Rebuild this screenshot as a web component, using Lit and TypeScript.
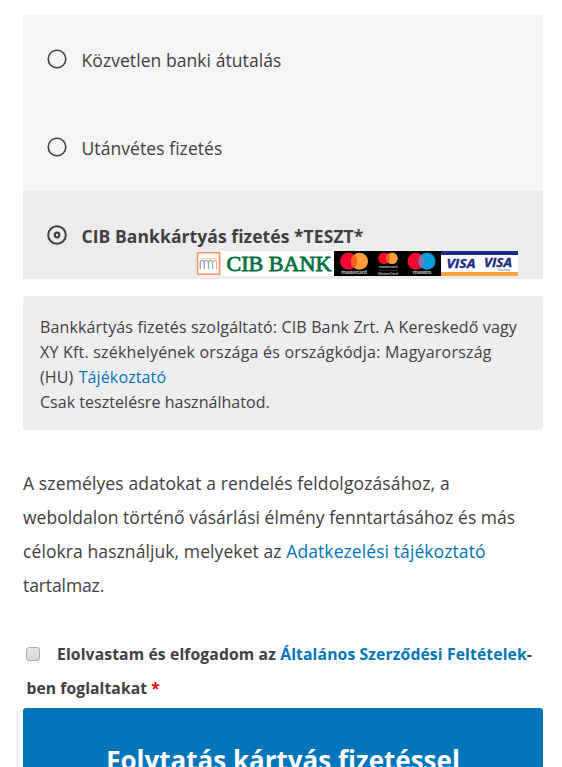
import { LitElement, html, css, svg } from "lit";
import { customElement, property } from "lit/decorators.js";

@customElement("card-logos")
class CardLogos extends LitElement {
  static styles = css`
    :host { display: block; width: 322px; height: 25px; }
    svg { display: block; }
    .bank { font: 400 22px "Liberation Serif", serif; fill: #00703c; stroke: #00703c; stroke-width: 0.8px; }
    .brand { font: 700 5.5px "Open Sans", sans-serif; fill: #aaa; }
    .tiny { font-size: 4px; fill: #999; }
    .visa { font: italic 700 13px "Open Sans", sans-serif; fill: #1b2a80; stroke: #1b2a80; stroke-width: 0.3px; }
    .electron { font: italic 400 3.5px "Open Sans", sans-serif; fill: #555b9a; }
  `;

  private pair(x: number, y: number, r: number, gap: number, left: string, mid: string, right: string) {
    return svg`
      <circle cx=${x} cy=${y} r=${r} fill=${left} />
      <circle cx=${x + gap} cy=${y} r=${r} fill=${right} />
      <ellipse cx=${x + gap / 2} cy=${y} rx=${r - gap / 2} ry=${r * 0.72} fill=${mid} />`;
  }

  render() {
    return html`<svg width="322" height="25" viewBox="0 0 322 25">
      <rect width="138" height="25" fill="#fff" />
      <rect x="1.5" y="1.7" width="22" height="21.6" fill="#fff" stroke="#f79a6b" stroke-width="1.8" />
      <path d="M4 7.8H21" stroke="#f6d58a" stroke-width="1.2" />
      <path d="M4.2 18V12Q4.2 9.5 6.2 9.5T8.2 12V18" fill="none" stroke="#8b83ba" stroke-width="1.1" />
      <path d="M8.2 12Q8.4 9.5 10.4 9.5T12.4 12V18" fill="none" stroke="#8aa6c4" stroke-width="1.1" />
      <path d="M12.6 18V12Q12.6 9.5 14.6 9.5T16.6 12V18" fill="none" stroke="#82b899" stroke-width="1.1" />
      <path d="M16.8 12Q17 9.5 18.8 9.5T20.6 12V18" fill="none" stroke="#ee9c85" stroke-width="1.1" />
      <text class="bank" x="30.5" y="20.2" textLength="105" lengthAdjust="spacingAndGlyphs">CIB BANK</text>
      <rect x="138" width="107" height="25" fill="#000" />
      ${this.pair(152.5, 10.3, 8.5, 11, "#f3072c", "#fa5b21", "#fc9d38")}
      ${this.pair(188, 7.3, 5.8, 8, "#f3072c", "#fa5b21", "#fc9d38")}
      ${this.pair(220, 10.3, 8.5, 11, "#f3072c", "#7673b8", "#00a0df")}
      <text class="brand" x="145" y="23" textLength="26">mastercard</text>
      <text class="brand tiny" x="182.5" y="16.8" textLength="19">mastercard</text>
      <path d="M182 19.3H202" stroke="#555" stroke-width="0.6" />
      <text class="brand tiny" x="182" y="24" textLength="20">MasterCard</text>
      <text class="brand" x="226" y="23" text-anchor="middle" textLength="19">maestro</text>
      <rect x="245" width="77" height="25" fill="#fff" />
      <rect x="245" width="77" height="4" fill="#1d2c83" />
      <rect x="245" y="21" width="77" height="4" fill="#fba13d" />
      <text class="visa" x="250.5" y="17.4" textLength="29" lengthAdjust="spacingAndGlyphs">VISA</text>
      <text class="visa" x="288" y="16.2" textLength="28" lengthAdjust="spacingAndGlyphs">VISA</text>
      <text class="electron" x="302" y="20" textLength="12">Electron</text>
    </svg>`;
  }
}

@customElement("pay-option")
class PayOption extends LitElement {
  @property({ type: Boolean }) checked = false;
  static styles = css`
    :host { display: flex; flex-direction: column; height: 88px; background: #f5f5f5; box-sizing: border-box; padding: 0 25px 0 24px; }
    :host([checked]) { background: #ececec; }
    .row { display: flex; align-items: center; height: 26px; margin-top: 32px; }
    svg { flex: none; margin: 0 14.5px 3px 0; }
    .label { white-space: nowrap; }
    .logos { align-self: flex-end; margin-top: 2px; }
  `;
  render() {
    return html`<div class="row">
        <svg width="20" height="20" viewBox="0 0 20 20">
          <circle cx="10" cy="10" r="8.8" fill="none" stroke="#404040" stroke-width=${this.checked ? 2 : 1.6} />
          ${this.checked ? svg`<circle cx="10" cy="10" r="2.3" fill="none" stroke="#404040" stroke-width="2.2" />` : ""}
        </svg>
        <span class="label"><slot></slot></span>
      </div>
      <div class="logos"><slot name="logos"></slot></div>`;
  }
}

@customElement("app-root")
class AppRoot extends LitElement {
  static styles = css`
    :host { display: block; height: 767px; overflow: hidden; box-sizing: border-box; padding: 15px 19px 0 23px; background: #fff; font-family: "Open Sans", "Noto Sans", sans-serif; color: #404040; }
    .line { display: block; white-space: nowrap; }
    a { color: #0075b9; text-decoration: none; }
    .option { font-size: 17.5px; letter-spacing: 0.07px; }
    .strong { font-weight: 700; }
    .details { height: 134px; box-sizing: border-box; margin-top: 17px; padding: 19px 17px 0; background: #eee; border-radius: 3px; font-size: 16px; line-height: 25px; }
    .d1 { letter-spacing: 0.145px; }
    .d2 { letter-spacing: 0.2px; }
    .d3 { letter-spacing: 0.12px; word-spacing: 1px; }
    .d4 { letter-spacing: 0.04px; }
    .privacy { margin-top: 36px; font-size: 17.5px; line-height: 34px; }
    .p1 { letter-spacing: 0.13px; }
    .p2 { letter-spacing: 0.035px; }
    .p3 { letter-spacing: 0.09px; }
    .p4 { letter-spacing: -0.1px; }
    .terms { margin-top: 35px; padding-left: 3px; font-size: 15.7px; font-weight: 700; line-height: 34px; }
    .t1 { letter-spacing: 0.13px; }
    .t2 { letter-spacing: 0.07px; padding-left: 0.5px; }
    .check { display: inline-block; box-sizing: border-box; width: 14px; height: 14px; margin: 0 17px 0 0; border: 1px solid #aaa; border-radius: 3px; background: linear-gradient(#e6e6e6, #dadada); vertical-align: -1px; }
    .required { color: #f00; }
    .submit { display: block; width: 520px; height: 100px; margin-top: 3px; padding: 3px 0 0; border: 0; border-radius: 3px; background: #0075b9; color: #fff; font: 700 26px/48px "Open Sans", "Noto Sans", sans-serif; box-sizing: border-box; }
    .submit span { display: block; white-space: nowrap; }
  `;
  render() {
    return html`
      <div>
        <pay-option><span class="option">Közvetlen banki átutalás</span></pay-option>
        <pay-option><span class="option">Utánvétes fizetés</span></pay-option>
        <pay-option checked>
          <span class="option strong">CIB Bankkártyás fizetés *TESZT*</span>
          <card-logos slot="logos"></card-logos>
        </pay-option>
      </div>
      <div class="details">
        <span class="line d1">Bankkártyás fizetés szolgáltató: CIB Bank Zrt. A Kereskedő vagy</span>
        <span class="line d2">XY Kft. székhelyének országa és országkódja: Magyarország</span>
        <span class="line d3">(HU) <a>Tájékoztató</a></span>
        <span class="line d4">Csak tesztelésre használhatod.</span>
      </div>
      <div class="privacy">
        <span class="line p1">A személyes adatokat a rendelés feldolgozásához, a</span>
        <span class="line p2">weboldalon történő vásárlási élmény fenntartásához és más</span>
        <span class="line p3">célokra használjuk, melyeket az <a>Adatkezelési tájékoztató</a></span>
        <span class="line p4">tartalmaz.</span>
      </div>
      <div class="terms">
        <span class="line t1"><span class="check"></span>Elolvastam és elfogadom az <a>Általános Szerződési Feltételek</a>-</span>
        <span class="line t2">ben foglaltakat <span class="required">*</span></span>
      </div>
      <button class="submit"><span>Folytatás kártyás fizetéssel</span></button>
    `;
  }
}
